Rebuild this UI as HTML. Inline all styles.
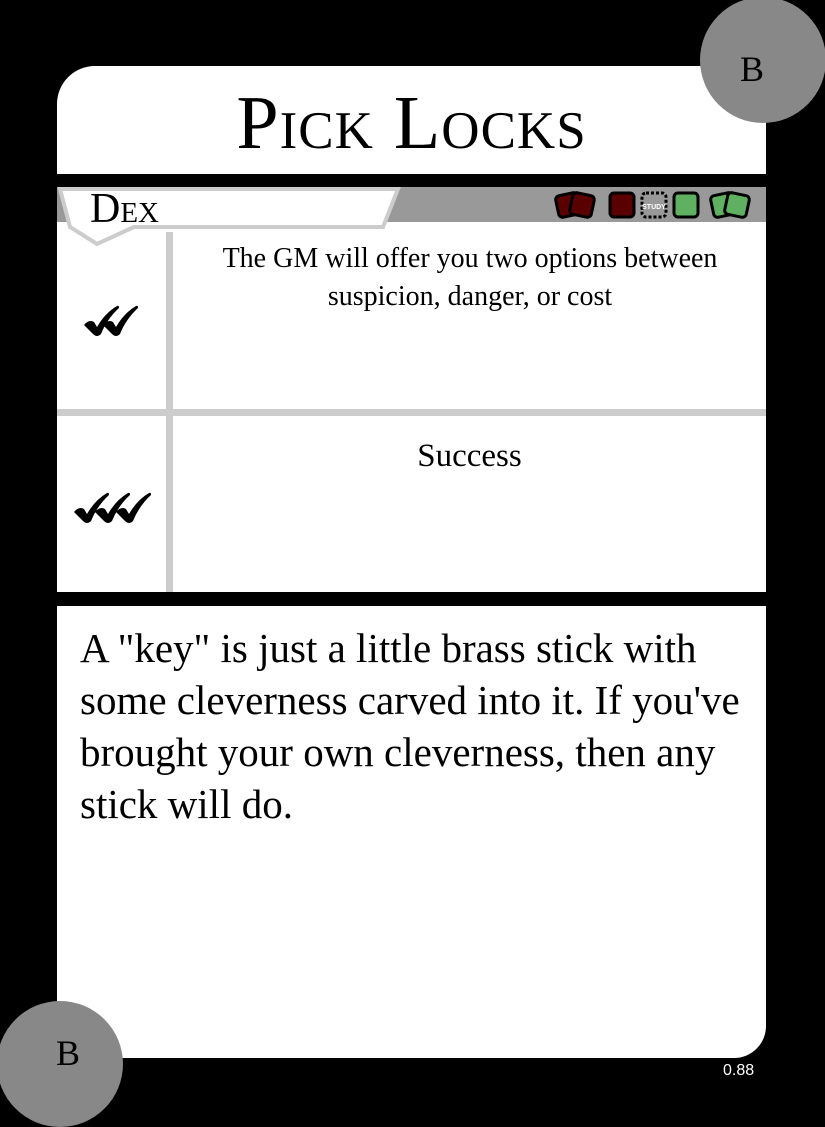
<!DOCTYPE html>
<html><head><meta charset="utf-8"><style>
body{margin:0;width:825px;height:1125px;background:#000;position:relative;overflow:hidden;font-family:"Liberation Serif",serif}
.abs{position:absolute}
</style></head><body>
<div class="abs" style="left:57px;top:66px;width:709px;height:108px;background:#fff;border-top-left-radius:38px;border-top-right-radius:4px"></div>
<div class="abs" style="left:57px;top:80px;width:709px;text-align:center;font-size:76px;line-height:86px;font-variant:small-caps;color:#000;letter-spacing:1px">Pick Locks</div>
<div class="abs" style="left:700px;top:-3px;width:126px;height:126px;border-radius:50%;background:#888"></div>
<div class="abs" style="left:740px;top:48px;font-size:36px;color:#000">B</div>
<div class="abs" style="left:57px;top:187px;width:709px;height:35px;background:#999"></div>
<div class="abs" style="left:57px;top:222px;width:709px;height:370px;background:#fff"></div>
<div class="abs" style="left:57px;top:409px;width:709px;height:7px;background:#ccc"></div>
<div class="abs" style="left:166px;top:232px;width:7px;height:360px;background:#ccc"></div>
<svg class="abs" style="left:57px;top:187px" width="345" height="60">
<polygon points="3,2 341,2 326,40 77,40 40,57 13,40" fill="#fff" stroke="#ccc" stroke-width="4"/>
</svg>
<div class="abs" style="left:90px;top:186px;font-size:42px;line-height:46px;font-variant:small-caps">Dex</div>
<svg class="abs" style="left:550px;top:186px" width="210" height="38">
<g stroke="#000" stroke-width="3" stroke-linejoin="round">
<rect x="7" y="8" width="22" height="22" rx="4" fill="#5a0000" transform="rotate(-12 18 19)"/>
<rect x="21" y="8" width="22" height="22" rx="4" fill="#5a0000" transform="rotate(12 32 19)"/>
<rect x="60" y="7" width="24" height="24" rx="4" fill="#5a0000"/>
<rect x="92" y="7" width="24" height="24" rx="4" fill="none" stroke-dasharray="3,2"/>
<rect x="124" y="7" width="24" height="24" rx="4" fill="#5fb060"/>
<rect x="162" y="8" width="22" height="22" rx="4" fill="#5fb060" transform="rotate(-12 173 19)"/>
<rect x="176" y="8" width="22" height="22" rx="4" fill="#5fb060" transform="rotate(12 187 19)"/>
</g>
<text x="104" y="23" font-family="Liberation Sans" font-size="7" font-weight="bold" fill="#fff" text-anchor="middle">STUDY</text>
</svg>
<div class="abs" style="left:195px;top:240px;width:550px;text-align:center;font-size:28px;line-height:38px">The GM will offer you two options between suspicion, danger, or cost</div>
<div class="abs" style="left:173px;top:436px;width:593px;text-align:center;font-size:33px;line-height:40px">Success</div>
<svg class="abs" style="left:83px;top:303px" width="60" height="34" viewBox="0 0 60 34">
<g fill="#000">
<path d="M1 22 Q6 16 11 19 L14 24 Q22 10 34 3 Q36 2 36 5 Q24 16 18 31 Q14 35 10 31 Z"/>
<path d="M20 22 Q25 16 30 19 L33 24 Q41 10 53 3 Q55 2 55 5 Q43 16 37 31 Q33 35 29 31 Z"/>
</g></svg>
<svg class="abs" style="left:73px;top:490px" width="80" height="34" viewBox="0 0 80 34">
<g fill="#000">
<path d="M1 22 Q6 16 11 19 L14 24 Q22 10 34 3 Q36 2 36 5 Q24 16 18 31 Q14 35 10 31 Z"/>
<path d="M22 22 Q27 16 32 19 L35 24 Q43 10 55 3 Q57 2 57 5 Q45 16 39 31 Q35 35 31 31 Z"/>
<path d="M43 22 Q48 16 53 19 L56 24 Q64 10 76 3 Q78 2 78 5 Q66 16 60 31 Q56 35 52 31 Z"/>
</g></svg>
<div class="abs" style="left:57px;top:606px;width:709px;height:452px;background:#fff;border-bottom-right-radius:32px"></div>
<div class="abs" style="left:80px;top:622px;width:680px;font-size:41px;line-height:52px">A "key" is just a little brass stick with some cleverness carved into it. If you've brought your own cleverness, then any stick will do.</div>
<div class="abs" style="left:-3px;top:1001px;width:126px;height:126px;border-radius:50%;background:#888"></div>
<div class="abs" style="left:56px;top:1032px;font-size:36px;color:#000">B</div>
<div class="abs" style="left:723px;top:1062px;font-family:'Liberation Sans',sans-serif;font-size:16px;color:#fff">0.88</div>
</body></html>
